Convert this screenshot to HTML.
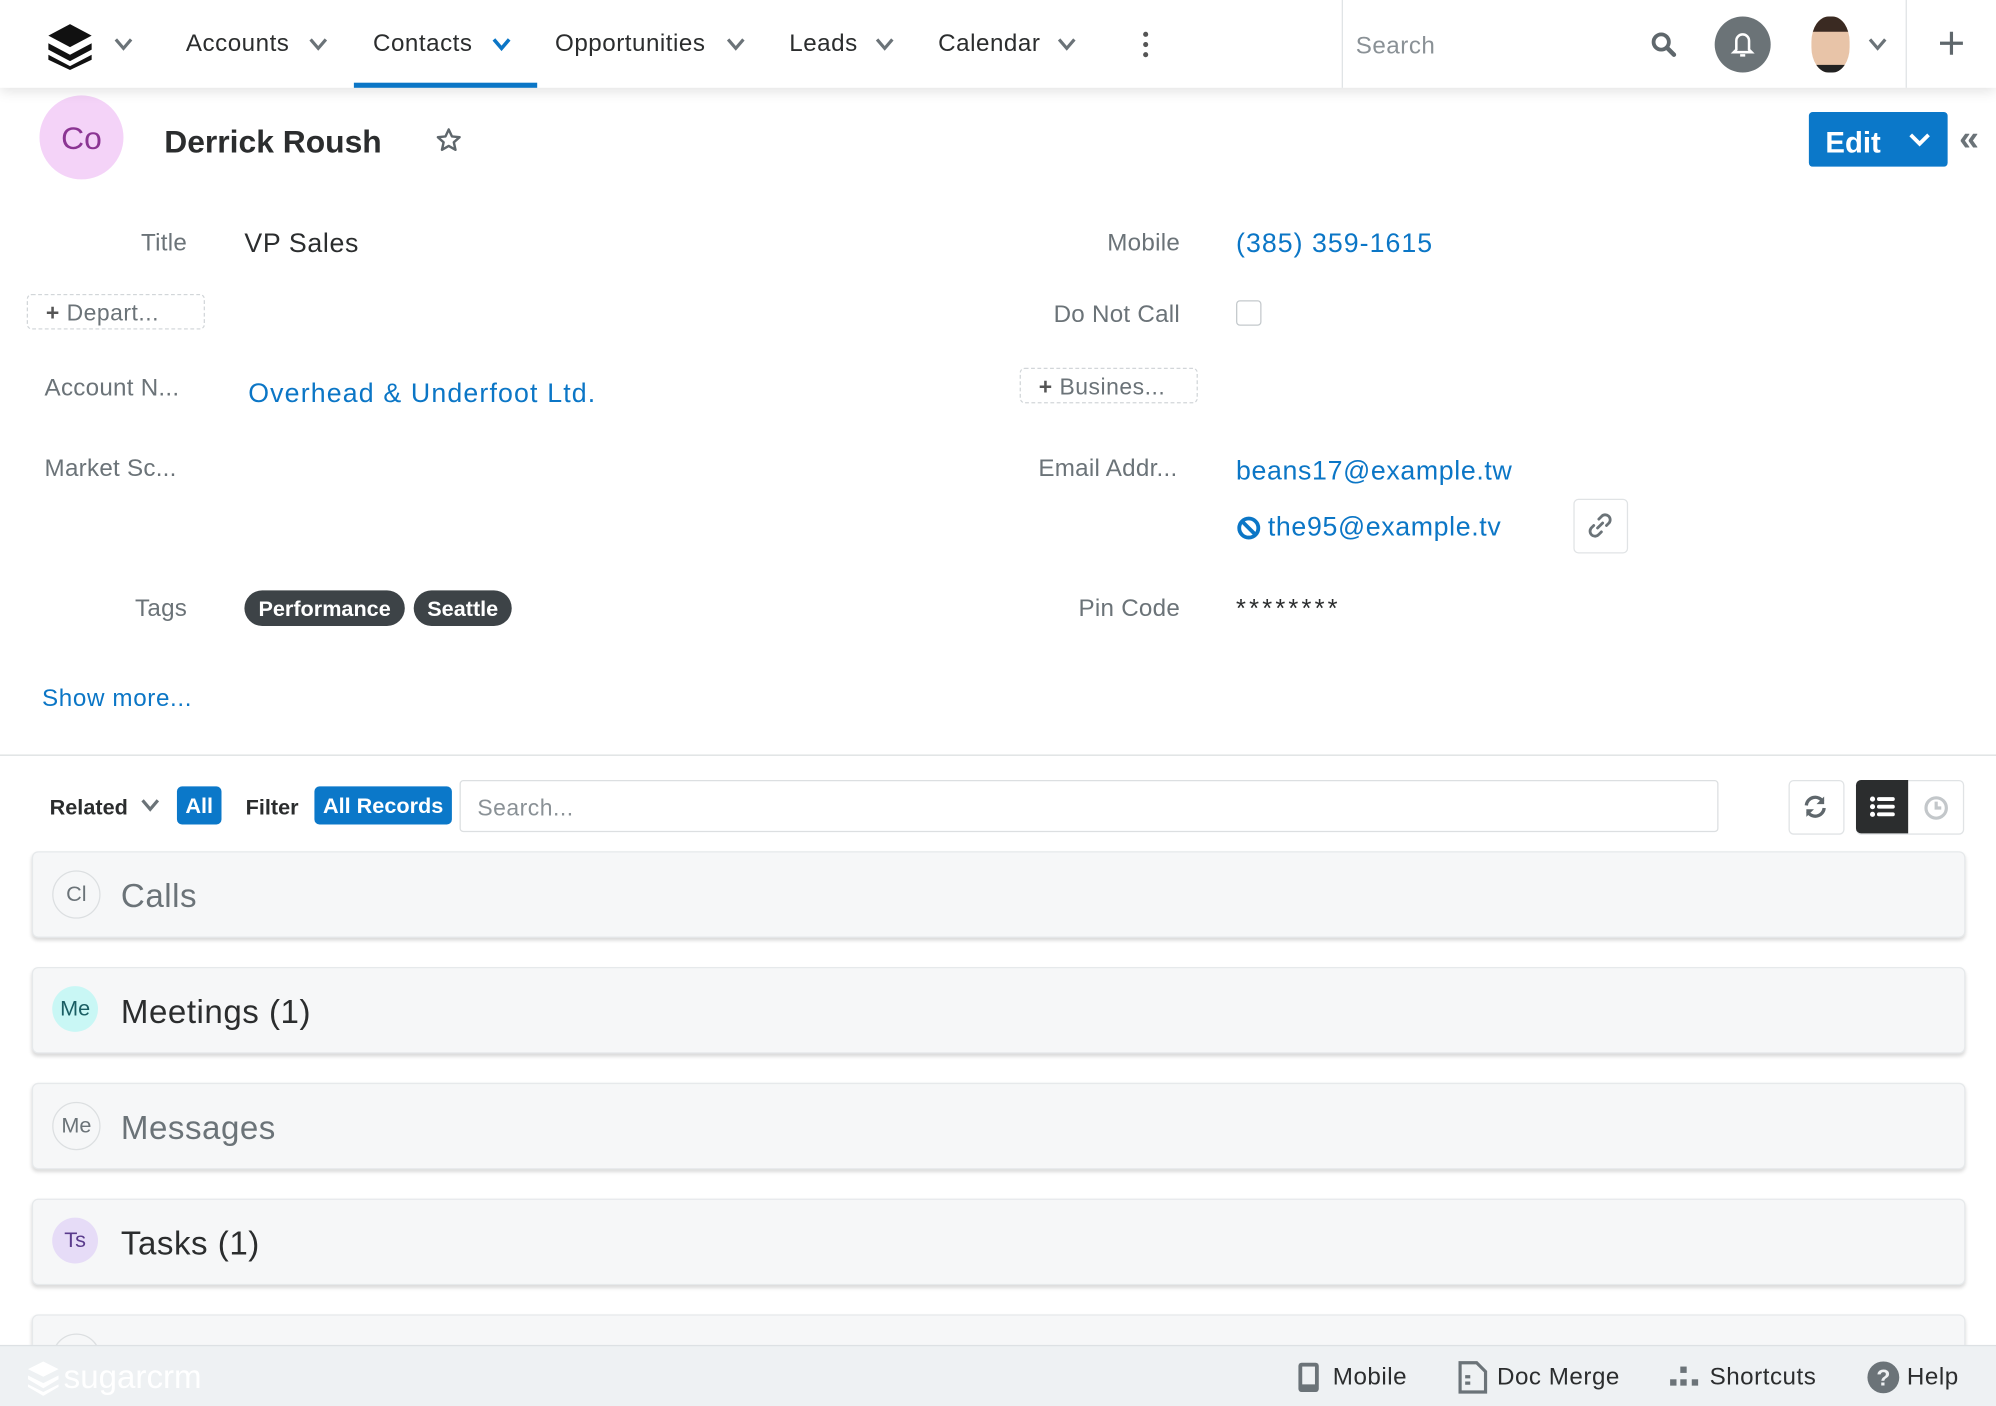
<!DOCTYPE html>
<html><head><meta charset="utf-8"><style>
html,body{margin:0;padding:0;width:1996px;height:1406px;overflow:hidden;background:#fff}
#w{position:absolute;left:0;top:0;width:1568px;height:1105px;overflow:hidden;transform:scale(1.27296,1.2724);transform-origin:0 0;font-family:"Liberation Sans",Arial,sans-serif;color:#2b2d2e}
.a{position:absolute;white-space:nowrap}
.t{position:absolute;white-space:nowrap;height:30px;line-height:32px}
.lbl{color:#6b7378;font-size:19px;text-align:right;letter-spacing:.2px}
.blue{color:#0b76c6}
.v{letter-spacing:.5px}
.nav{font-size:19px;color:#2b2d2e;letter-spacing:.4px}
.panel{position:absolute;left:25px;width:1517px;height:66px;background:#f6f7f8;border:1px solid #e6e9eb;border-radius:5px;box-shadow:0 2px 3px rgba(0,0,0,.15)}
.pc{position:absolute;left:15px;top:14px;width:36px;height:36px;border-radius:50%;text-align:center;line-height:36px;font-size:17px}
.pt{position:absolute;left:69px;top:17px;font-size:26px;line-height:34px;letter-spacing:.4px}
</style></head><body><div id="w">
<div class="a" style="left:0;top:0;width:1568px;height:69px;background:#fff;box-shadow:0 3px 10px rgba(0,0,0,.12);z-index:2">
<svg class="a" style="left:36px;top:17px" width="38" height="38" viewBox="0 0 38 38"><path d="M19 2 L36 11 L19 20 L2 11Z" fill="#111"/><path d="M2 17 L19 26 L36 17 L36 22 L19 31 L2 22Z" fill="#111"/><path d="M2 26 L19 35 L36 26 L36 30 L19 38 L2 30Z" fill="#111"/></svg>
<svg class="a" style="left:89px;top:29px" width="16" height="12"><path d="M2 2 L8 9 L14 2" stroke="#6b7378" stroke-width="2.5" fill="none"/></svg>
<div class="t nav" style="left:146px;top:19px">Accounts</div>
<svg class="a" style="left:242px;top:29px" width="16" height="12"><path d="M2 2 L8 9 L14 2" stroke="#6b7378" stroke-width="2.5" fill="none"/></svg>
<div class="t nav blue" style="left:293px;top:19px">Contacts</div>
<svg class="a" style="left:386px;top:29px" width="16" height="12"><path d="M2 2 L8 9 L14 2" stroke="#0b76c6" stroke-width="2.8" fill="none"/></svg>
<div class="a" style="left:278px;top:65px;width:144px;height:4px;background:#0b76c6"></div>
<div class="t nav" style="left:436px;top:19px">Opportunities</div>
<svg class="a" style="left:570px;top:29px" width="16" height="12"><path d="M2 2 L8 9 L14 2" stroke="#6b7378" stroke-width="2.5" fill="none"/></svg>
<div class="t nav" style="left:620px;top:19px">Leads</div>
<svg class="a" style="left:687px;top:29px" width="16" height="12"><path d="M2 2 L8 9 L14 2" stroke="#6b7378" stroke-width="2.5" fill="none"/></svg>
<div class="t nav" style="left:737px;top:19px">Calendar</div>
<svg class="a" style="left:830px;top:29px" width="16" height="12"><path d="M2 2 L8 9 L14 2" stroke="#6b7378" stroke-width="2.5" fill="none"/></svg>
<svg class="a" style="left:896px;top:24px" width="8" height="22"><circle cx="4" cy="3" r="2" fill="#555"/><circle cx="4" cy="11" r="2" fill="#555"/><circle cx="4" cy="19" r="2" fill="#555"/></svg>
<div class="a" style="left:1054px;top:0;width:1px;height:69px;background:#e0e3e5"></div>
<div class="t" style="left:1065px;top:21px;font-size:19px;color:#8a9196;letter-spacing:.4px">Search</div>
<svg class="a" style="left:1296px;top:24px" width="22" height="22"><circle cx="9" cy="9" r="6" stroke="#5f676c" stroke-width="3" fill="none"/><path d="M13.5 13.5 L19 19" stroke="#5f676c" stroke-width="3.5" stroke-linecap="round"/></svg>
<div class="a" style="left:1347px;top:13px;width:44px;height:44px;border-radius:50%;background:#6b7377"></div>
<svg class="a" style="left:1359px;top:24px" width="20" height="22"><path d="M5 15 L5 8 A5 5 0 0 1 15 8 L15 15 L17 17 L3 17Z" stroke="#fff" stroke-width="2" fill="none"/><path d="M8 19.5 L12 19.5" stroke="#fff" stroke-width="2"/></svg>
<div class="a" style="left:1423px;top:13px;width:30px;height:44px;border-radius:45%;background:#e8c4a8;overflow:hidden"><div class="a" style="left:0;top:0;width:30px;height:12px;background:#3a2a22;border-radius:14px 14px 0 0"></div><div class="a" style="left:0;top:38px;width:30px;height:6px;background:#222"></div></div>
<svg class="a" style="left:1467px;top:29px" width="16" height="12"><path d="M2 2 L8 9 L14 2" stroke="#6b7378" stroke-width="2.5" fill="none"/></svg>
<div class="a" style="left:1497px;top:0;width:1px;height:69px;background:#e0e3e5"></div>
<svg class="a" style="left:1523px;top:24px" width="20" height="20"><path d="M10 1 V19 M1 10 H19" stroke="#5f676c" stroke-width="2.5"/></svg>
</div>
<div class="a" style="left:31px;top:75px;width:66px;height:66px;border-radius:50%;background:#f4d3f8;color:#8b3593;font-size:25px;text-align:center;line-height:68px">Co</div>
<div class="t" style="left:129px;top:96px;font-size:25px;font-weight:bold;color:#2b2d2e">Derrick Roush</div>
<svg class="a" style="left:342px;top:100px" width="21" height="20" viewBox="0 0 24 23"><path d="M12 2 L14.9 8.3 L21.8 9 L16.6 13.6 L18.1 20.4 L12 16.9 L5.9 20.4 L7.4 13.6 L2.2 9 L9.1 8.3Z" stroke="#5f676c" stroke-width="2.2" fill="none" stroke-linejoin="round"/></svg>
<div class="a" style="left:1421px;top:88px;width:109px;height:43px;background:#0b78c9;border-radius:3px"></div>
<div class="t" style="left:1434px;top:96px;color:#fff;font-weight:bold;font-size:23px">Edit</div>
<svg class="a" style="left:1499px;top:103px" width="18" height="14"><path d="M2 3 L9 10 L16 3" stroke="#fff" stroke-width="3" fill="none"/></svg>
<div class="t" style="left:1539px;top:93px;color:#6b7378;font-size:28px;font-weight:bold">«</div>
<div class="t lbl" style="left:40px;width:107px;top:176px">Title</div>
<div class="t v" style="left:192px;top:176px;font-size:21px">VP Sales</div>
<div class="a" style="left:21px;top:231px;width:138px;height:26px;border:1px dashed #d2d6d9;border-radius:4px"></div>
<div class="t" style="left:36px;top:230px;font-size:18px;color:#6b7378;letter-spacing:.4px"><b style="color:#555">+</b> Depart...</div>
<div class="t lbl" style="left:35px;top:290px;text-align:left">Account N...</div>
<div class="t blue v" style="left:195px;top:294px;font-size:21px;letter-spacing:.9px">Overhead &amp; Underfoot Ltd.</div>
<div class="t lbl" style="left:35px;top:353px;text-align:left">Market Sc...</div>
<div class="t lbl" style="left:40px;width:107px;top:463px">Tags</div>
<div class="a" style="left:192px;top:464px;width:126px;height:28px;border-radius:14px;background:#3d4347;color:#fff;font-weight:bold;font-size:17px;text-align:center;line-height:29px">Performance</div>
<div class="a" style="left:325px;top:464px;width:77px;height:28px;border-radius:14px;background:#3d4347;color:#fff;font-weight:bold;font-size:17px;text-align:center;line-height:29px">Seattle</div>
<div class="t blue v" style="left:33px;top:534px;font-size:19px">Show more...</div>
<div class="t lbl" style="left:780px;width:147px;top:176px">Mobile</div>
<div class="t blue v" style="left:971px;top:176px;font-size:21px;letter-spacing:.8px">(385) 359-1615</div>
<div class="t lbl" style="left:780px;width:147px;top:232px">Do Not Call</div>
<div class="a" style="left:971px;top:236px;width:18px;height:18px;border:1px solid #c4c9cc;border-radius:3px"></div>
<div class="a" style="left:801px;top:289px;width:138px;height:26px;border:1px dashed #d2d6d9;border-radius:4px"></div>
<div class="t" style="left:816px;top:288px;font-size:18px;color:#6b7378;letter-spacing:.4px"><b style="color:#555">+</b> Busines...</div>
<div class="t lbl" style="left:780px;width:145px;top:353px">Email Addr...</div>
<div class="t blue v" style="left:971px;top:355px;font-size:21px">beans17@example.tw</div>
<svg class="a" style="left:971px;top:405px" width="20" height="20"><circle cx="10" cy="10" r="7.5" stroke="#0b76c6" stroke-width="3" fill="none"/><path d="M5 5 L15 15" stroke="#0b76c6" stroke-width="3"/></svg>
<div class="t blue v" style="left:996px;top:399px;font-size:21px">the95@example.tv</div>
<div class="a" style="left:1236px;top:392px;width:41px;height:41px;border:1px solid #e0e3e5;border-radius:4px"></div>
<svg class="a" style="left:1247px;top:403px" width="20" height="20" viewBox="0 0 20 20"><path d="M8 12 L12 8 M9 5 L11 3 A3.5 3.5 0 0 1 17 8 L15 10 M11 15 L9 17 A3.5 3.5 0 0 1 3 12 L5 10" stroke="#6b7378" stroke-width="2.2" fill="none" stroke-linecap="round"/></svg>
<div class="t lbl" style="left:780px;width:147px;top:463px">Pin Code</div>
<div class="t" style="left:971px;top:463px;font-size:20px;letter-spacing:2.5px">********</div>
<div class="a" style="left:0;top:593px;width:1568px;height:1px;background:#dcdfe1"></div>
<div class="t" style="left:39px;top:619px;font-size:17px;font-weight:bold">Related</div>
<svg class="a" style="left:110px;top:627px" width="16" height="12"><path d="M2 2 L8 9 L14 2" stroke="#6b7378" stroke-width="2.5" fill="none"/></svg>
<div class="a" style="left:139px;top:618px;width:35px;height:30px;background:#0b78c9;border-radius:4px;color:#fff;font-weight:bold;font-size:17px;text-align:center;line-height:31px">All</div>
<div class="t" style="left:193px;top:619px;font-size:17px;font-weight:bold">Filter</div>
<div class="a" style="left:247px;top:618px;width:108px;height:30px;background:#0b78c9;border-radius:4px;color:#fff;font-weight:bold;font-size:17px;text-align:center;line-height:31px">All Records</div>
<div class="a" style="left:361px;top:613px;width:987px;height:39px;border:1px solid #dcdfe1;border-radius:3px"></div>
<div class="t" style="left:375px;top:619px;font-size:18px;color:#8a9196;letter-spacing:.4px">Search...</div>
<div class="a" style="left:1405px;top:613px;width:42px;height:41px;border:1px solid #e0e3e5;border-radius:4px"></div>
<svg class="a" style="left:1415px;top:623px" width="22" height="22" viewBox="0 0 22 22"><path d="M4 10 A7 7 0 0 1 17 7" stroke="#5f676c" stroke-width="2.6" fill="none"/><path d="M18 3 L18 9 L12 9Z" fill="#5f676c"/><path d="M18 12 A7 7 0 0 1 5 15" stroke="#5f676c" stroke-width="2.6" fill="none"/><path d="M4 19 L4 13 L10 13Z" fill="#5f676c"/></svg>
<div class="a" style="left:1458px;top:613px;width:83px;height:41px;border:1px solid #e0e3e5;border-radius:4px"></div>
<div class="a" style="left:1458px;top:613px;width:41px;height:42px;background:#2b2d2e;border-radius:4px 0 0 4px"></div>
<svg class="a" style="left:1468px;top:624px" width="22" height="20"><circle cx="3" cy="4" r="2" fill="#fff"/><circle cx="3" cy="10" r="2" fill="#fff"/><circle cx="3" cy="16" r="2" fill="#fff"/><path d="M8 4 H19 M8 10 H19 M8 16 H19" stroke="#fff" stroke-width="3" stroke-linecap="round"/></svg>
<svg class="a" style="left:1510px;top:624px" width="22" height="22"><circle cx="11" cy="11" r="8" stroke="#c3c7ca" stroke-width="2.5" fill="none"/><path d="M11 6 V11 H15" stroke="#c3c7ca" stroke-width="2.5" fill="none"/></svg>
<div class="panel" style="top:669px"><div class="pc" style="border:1px solid #dcdfe1;color:#6b7378;background:#f6f7f8">Cl</div><div class="pt" style="color:#6b7378">Calls</div></div>
<div class="panel" style="top:760px"><div class="pc" style="background:#c9f7f5;color:#1a5e63">Me</div><div class="pt">Meetings (1)</div></div>
<div class="panel" style="top:851px"><div class="pc" style="border:1px solid #dcdfe1;color:#6b7378;background:#f6f7f8">Me</div><div class="pt" style="color:#6b7378">Messages</div></div>
<div class="panel" style="top:942px"><div class="pc" style="background:#e6dcf7;color:#5a3b8c">Ts</div><div class="pt">Tasks (1)</div></div>
<div class="panel" style="top:1033px;height:40px"><div class="pc" style="border:1px solid #dcdfe1;background:#f6f7f8"></div></div>
<div class="a" style="left:0;top:1057px;width:1568px;height:48px;background:#eef1f3;border-top:1px solid #dde1e4;z-index:3">
<svg class="a" style="left:20px;top:11px" width="30" height="28"><path d="M14 1 L26 7 L14 13 L2 7Z" fill="#fff"/><path d="M2 12 L14 18 L26 12 L26 15 L14 22 L2 15Z" fill="#fff"/><path d="M2 19 L14 25 L26 19 L26 21 L14 28 L2 21Z" fill="#fff"/></svg>
<div class="t" style="left:50px;top:8px;font-size:26px;color:#fff">sugarcrm</div>
<svg class="a" style="left:1018px;top:12px" width="20" height="25"><rect x="2" y="1" width="16" height="23" rx="2.5" fill="#6b7378"/><rect x="5" y="4" width="10" height="14" fill="#eef1f3"/></svg>
<div class="t" style="left:1047px;top:9px;font-size:19px;letter-spacing:.4px">Mobile</div>
<svg class="a" style="left:1145px;top:11px" width="24" height="27"><path d="M2 2 H15 L22 9 V25 H2Z" stroke="#6b7378" stroke-width="2.5" fill="none"/><path d="M6 13 H10 M6 18 H10" stroke="#6b7378" stroke-width="2.5"/></svg>
<div class="t" style="left:1176px;top:9px;font-size:19px;letter-spacing:.4px">Doc Merge</div>
<svg class="a" style="left:1311px;top:15px" width="26" height="18"><rect x="9" y="1" width="5" height="5" fill="#6b7378"/><rect x="1" y="11" width="5" height="5" fill="#6b7378"/><rect x="9" y="11" width="5" height="5" fill="#6b7378"/><rect x="18" y="11" width="5" height="5" fill="#6b7378"/></svg>
<div class="t" style="left:1343px;top:9px;font-size:19px;letter-spacing:.4px">Shortcuts</div>
<div class="a" style="left:1467px;top:12px;width:25px;height:25px;border-radius:50%;background:#6b7378;color:#eef1f3;font-weight:bold;font-size:18px;text-align:center;line-height:26px">?</div>
<div class="t" style="left:1498px;top:9px;font-size:19px;letter-spacing:.4px">Help</div>
</div>
</div></body></html>
